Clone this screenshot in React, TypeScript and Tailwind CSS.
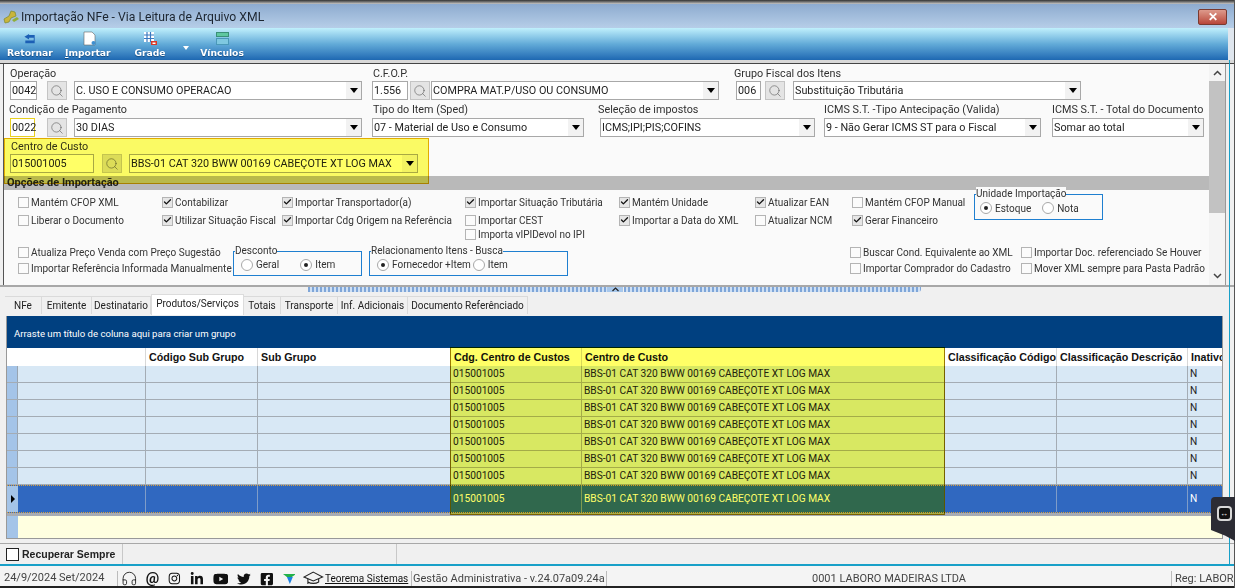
import { Check, Headphones, Search } from 'lucide-react';
import { FaFacebookSquare, FaInstagram, FaLinkedinIn, FaTwitter, FaYoutube } from 'react-icons/fa';

/* ---------- form bits ---------- */

function Lens({ yellow }: { yellow?: boolean }) {
  return (
    <div className={`flex items-center justify-center h-[19px] w-[20px] border border-[#c4c4c4] ${yellow ? 'bg-[#dcdcdc]' : 'bg-[#e4e4e4]'}`}>
      <Search size={14} strokeWidth={1} color="#555" />
    </div>
  );
}

function TextBox({ value, width, className = '' }: { value: string; width: number; className?: string }) {
  return (
    <div style={{ width }} className={`h-[19px] shrink-0 bg-white border border-[#a8a8a8] pl-[1px] leading-[17px] whitespace-nowrap ${className}`}>
      {value}
    </div>
  );
}

function Combo({ value, width }: { value: string; width: number }) {
  return (
    <div style={{ width }} className="h-[19px] shrink-0 flex bg-white border border-[#a8a8a8] leading-[17px]">
      <span className="flex-1 pl-[1px] overflow-hidden whitespace-nowrap">{value}</span>
      <span className="w-[15px] bg-[#f2f2f2] flex items-center justify-center">
        <span className="w-0 h-0 border-x-[4px] border-x-transparent border-t-[5px] border-t-black" />
      </span>
    </div>
  );
}

function Label({ text, className = '' }: { text: string; className?: string }) {
  return <div className={`h-[16px] leading-[18px] whitespace-nowrap text-[#303030] ${className}`}>{text}</div>;
}

function Check2({ label, on }: { label: string; on?: boolean }) {
  return (
    <div className="flex items-center gap-[2px] h-[14px] whitespace-nowrap text-[10px] text-[#333]">
      <span className={`flex items-center justify-center shrink-0 w-[9px] h-[9px] box-content border border-[#b4b4b4] ${on ? 'bg-[#e6e6e6]' : 'bg-[#fbfbfb]'}`}>
        {on && <Check size={10} strokeWidth={3.5} color="#111" />}
      </span>
      {label}
    </div>
  );
}

function Radio({ label, on }: { label: string; on?: boolean }) {
  return (
    <span className="flex items-center gap-[3px] whitespace-nowrap">
      <span className="flex items-center justify-center shrink-0 w-[10px] h-[10px] box-content rounded-full border border-[#a8a8a8] bg-white">
        {on && <span className="w-[4px] h-[4px] rounded-full bg-[#222]" />}
      </span>
      {label}
    </span>
  );
}

function GroupBox({ title, width, height, children }: { title: string; width: number; height: number; children: React.ReactNode }) {
  return (
    <div style={{ width, height }} className="relative shrink-0 border border-[#1f7fd0] flex items-center text-[10px] text-[#333]">
      <span className="absolute -top-[8px] left-[1px] bg-[#fafafa] leading-[13px] whitespace-nowrap">{title}</span>
      {children}
    </div>
  );
}

/* ---------- grid data ---------- */

const COLS = [128, 112, 193, 131, 363, 112, 131, 36];
const HEADERS = ['', 'Código Sub Grupo', 'Sub Grupo', 'Cdg. Centro de Custos', 'Centro de Custo', 'Classificação Código', 'Classificação Descrição', 'Inativo'];
const ROW = ['', '', '', '015001005', 'BBS-01 CAT 320 BWW 00169 CABEÇOTE XT LOG MAX', '', '', 'N'];
const TABS = [
  ['NFe', 37],
  ['Emitente', 50],
  ['Destinatario', 59],
  ['Produtos/Serviços', 93],
  ['Totais', 37],
  ['Transporte', 57],
  ['Inf. Adicionais', 70],
  ['Documento Referênciado', 120],
] as const;

export default function App() {
  return (
    <div className="relative w-[1235px] h-[588px] overflow-hidden flex flex-col bg-[#f0f0f0] text-[10.8px] text-[#222] font-['Roboto','Noto_Sans',sans-serif]">
      {/* Title bar */}
      <div className="h-[4px] bg-gradient-to-b from-[#333] to-[#c8c8c8]" />
      <div className="h-[24px] shrink-0 flex items-center bg-gradient-to-b from-[#8eabcf] to-[#b6cee8] pl-[3px] pr-[8px] pt-[2px]">
        <svg width="17" height="17" viewBox="0 0 17 17">
          <path d="M1 10l5-3 2-5 4 1 1 4-5 2-2 4-4 1z" fill="#c9b53c" stroke="#7d8a2a" strokeWidth="0.7" />
          <path d="M9 11l5-3 2 2-5 3z" fill="#8fae3a" />
        </svg>
        <span className="ml-[1px] text-[12.2px] text-[#1c2530]">Importação NFe - Via Leitura de Arquivo XML</span>
        <div className="ml-auto w-[29px] h-[16px] rounded-[2px] border border-[#7a3a30] bg-gradient-to-b from-[#dd9a8c] to-[#b8463a] flex items-center justify-center text-white font-bold text-[12px] leading-none">
          ✕
        </div>
      </div>

      {/* Toolbar */}
      <div className="h-[32px] shrink-0 flex bg-gradient-to-b from-[#c0f0fc] via-[#62abd8] to-[#1e68b2] text-white font-['DejaVu_Sans',sans-serif] font-bold text-[9.2px] [text-shadow:0_1px_1px_#134a80] pl-[7px] border-r-[7px] border-r-[#dfe6ee]">
        <div className="w-[58px] flex flex-col items-start">
          <svg width="16" height="13" viewBox="0 0 16 13" className="ml-[15px] mt-[5px]">
            <path d="M7 1L2 4l5 3V5h5v3H3v3h10V2H7z" fill="#1c5fb5" />
          </svg>
          <span className="mt-[1px]">Retornar</span>
        </div>
        <div className="w-[68px] flex flex-col items-start">
          <svg width="14" height="15" viewBox="0 0 14 15" className="ml-[18px] mt-[3px]">
            <path d="M1 1h8l3 3v10H1z" fill="#fff" stroke="#666" strokeWidth="0.6" />
            <circle cx="10.5" cy="12" r="2" fill="#3f8fd0" />
          </svg>
          <span>
            <span className="underline">I</span>mportar
          </span>
        </div>
        <div className="w-[50px] flex flex-col items-center pr-[16px]">
          <svg width="15" height="15" viewBox="0 0 15 15" className="mt-[3px]">
            <path d="M1 1h10v10H1z" fill="#fff" />
            <path d="M1 4h10M1 7.500h10M4 1v10M7.500 1v10" stroke="#3a78c0" strokeWidth="1.200" />
            <path d="M8 10h6v4H8z" fill="#d83a2a" />
            <path d="M9.500 11.500h3v1.500h-3z" fill="#fff" />
          </svg>
          <span>Grade</span>
        </div>
        <div className="w-[16px] pt-[18px]">
          <span className="block w-0 h-0 border-x-[3px] border-x-transparent border-t-[4px] border-t-white" />
        </div>
        <div className="w-[46px] flex flex-col items-center">
          <svg width="13" height="14" viewBox="0 0 13 14" className="mt-[4px]">
            <rect x="0.500" y="0.500" width="12" height="4" fill="#5fc8a0" stroke="#3a9078" />
            <rect x="0.500" y="6.500" width="12" height="6" fill="#7fc8e0" stroke="#4a98b8" />
          </svg>
          <span>Vínculos</span>
        </div>
      </div>

      {/* Options panel */}
      <div className="h-[4px] shrink-0 bg-[#d8d8d8] border-b border-[#444]" />
      <div className="ml-[3px] mr-[9px] h-[221px] shrink-0 flex border-l border-[#555] border-r border-r-[#999] bg-[#fafafa]">
        <div className="relative flex-1 min-w-0 flex flex-col">
          {/* first row */}
          <div className="flex pl-[6px] h-[36px] pt-[1px]">
            <div className="w-[362px] shrink-0">
              <Label text="Operação" />
              <div className="flex">
                <TextBox value="0042" width={27} />
                <div className="ml-[10px]"><Lens /></div>
                <div className="ml-[7px]"><Combo value="C. USO E CONSUMO OPERACAO" width={288} /></div>
              </div>
            </div>
            <div className="w-[363px] shrink-0">
              <Label text="C.F.O.P." className="ml-[1px]" />
              <div className="flex">
                <TextBox value="1.556" width={36} />
                <div className="ml-[2px]"><Lens /></div>
                <div className="ml-[1px]"><Combo value="COMPRA MAT.P/USO OU CONSUMO" width={288} /></div>
              </div>
            </div>
            <div>
              <Label text="Grupo Fiscal dos Itens" className="-ml-[1px]" />
              <div className="flex">
                <TextBox value="006" width={25} className="ml-[1px]" />
                <div className="ml-[4px]"><Lens /></div>
                <div className="ml-[8px]"><Combo value="Substituição Tributária" width={288} /></div>
              </div>
            </div>
          </div>

          {/* second row */}
          <div className="flex pl-[6px] h-[37px] pt-[1px]">
            <div className="w-[362px] shrink-0">
              <Label text="Condição de Pagamento" className="-ml-[1px] mb-[1px]" />
              <div className="flex">
                <TextBox value="0022" width={25} className="border-[#e8d020]" />
                <div className="ml-[12px]"><Lens /></div>
                <div className="ml-[7px]"><Combo value="30 DIAS" width={288} /></div>
              </div>
            </div>
            <div className="w-[226px] shrink-0">
              <Label text="Tipo do Item (Sped)" className="ml-[1px] mb-[1px]" />
              <Combo value="07 - Material de Uso e Consumo" width={212} />
            </div>
            <div className="w-[226px] shrink-0">
              <Label text="Seleção de impostos" className="mb-[1px]" />
              <div className="ml-[2px]"><Combo value="ICMS;IPI;PIS;COFINS" width={215} /></div>
            </div>
            <div className="w-[228px] shrink-0">
              <Label text="ICMS S.T. -Tipo Antecipação (Valida)" className="mb-[1px]" />
              <Combo value="9 - Não Gerar ICMS ST para o Fiscal" width={217} />
            </div>
            <div>
              <Label text="ICMS S.T. - Total do Documento" className="mb-[1px]" />
              <Combo value="Somar ao total" width={152} />
            </div>
          </div>

          {/* third row */}
          <div className="pl-[6px] h-[39px] pt-[1px]">
            <Label text="Centro de Custo" className="ml-[1px]" />
            <div className="flex">
              <TextBox value="015001005" width={84} />
              <div className="ml-[8px]"><Lens yellow /></div>
              <div className="ml-[7px]"><Combo value="BBS-01 CAT 320 BWW 00169 CABEÇOTE XT LOG MAX" width={289} /></div>
            </div>
          </div>

          <div className="h-[14px] shrink-0 bg-[#b9b9b9] pl-[3px] text-[11px] font-bold leading-[13px] text-[#222]">Opções de Importação</div>

          {/* check options */}
          <div className="mt-[5px] ml-[14px] h-[50px] grid grid-cols-[144px_120px_183px_154px_136px_97px_122px_auto] grid-rows-[18px_14px_14px] items-start">
            <Check2 label="Mantém CFOP XML" />
            <Check2 label="Contabilizar" on />
            <Check2 label="Importar Transportador(a)" on />
            <Check2 label="Importar Situação Tributária" on />
            <Check2 label="Mantém Unidade" on />
            <Check2 label="Atualizar EAN" on />
            <Check2 label="Mantém CFOP Manual" />
            <div className="row-span-3 -mt-[1px]">
              <GroupBox title="Unidade Importação" width={129} height={26}>
                <div className="flex gap-[11px] pl-[5px] pt-[2px]">
                  <Radio label="Estoque" on />
                  <Radio label="Nota" />
                </div>
              </GroupBox>
            </div>
            <Check2 label="Liberar o Documento" />
            <Check2 label="Utilizar Situação Fiscal" on />
            <Check2 label="Importar Cdg Origem na Referência" on />
            <Check2 label="Importar CEST" />
            <Check2 label="Importar a Data do XML" on />
            <Check2 label="Atualizar NCM" />
            <Check2 label="Gerar Financeiro" on />
            <div className="col-start-4">
              <Check2 label="Importa vIPIDevol no IPI" />
            </div>
          </div>

          <div className="mt-[6px] ml-[14px] flex">
            <div className="w-[215px] shrink-0 flex flex-col gap-[2px] -mt-[6px]">
              <Check2 label="Atualiza Preço Venda com Preço Sugestão" />
              <Check2 label="Importar Referência Informada Manualmente" />
            </div>
            <GroupBox title="Desconto" width={129} height={25}>
              <div className="flex gap-[21px] pl-[7px] pt-[2px]">
                <Radio label="Geral" />
                <Radio label="Item" on />
              </div>
            </GroupBox>
            <div className="ml-[7px]">
              <GroupBox title="Relacionamento Itens - Busca" width={199} height={25}>
                <div className="flex gap-[2px] pl-[7px] pt-[2px]">
                  <Radio label="Fornecedor +Item" on />
                  <Radio label="Item" />
                </div>
              </GroupBox>
            </div>
            <div className="ml-[282px] w-[171px] shrink-0 flex flex-col gap-[2px] -mt-[6px]">
              <Check2 label="Buscar Cond. Equivalente ao XML" />
              <Check2 label="Importar Comprador do Cadastro" />
            </div>
            <div className="shrink-0 flex flex-col gap-[2px] -mt-[6px]">
              <Check2 label="Importar Doc. referenciado Se Houver" />
              <Check2 label="Mover XML sempre para Pasta Padrão" />
            </div>
          </div>

          {/* highlight drawn over the cost-centre block */}
          <div className="absolute left-0 top-[74px] w-[425px] h-[46px] bg-[#ffff66] mix-blend-multiply border border-[#e6b000]" />
        </div>

        {/* Scrollbar */}
        <div className="w-[16px] shrink-0 flex flex-col items-center bg-[#f4f4f4] text-[#444]">
          <svg width="9" height="6" viewBox="0 0 9 6" className="mt-[6px] mb-[5px]"><path d="M1 5l3.500-3.500L8 5" fill="none" stroke="#444" strokeWidth="1.500" /></svg>
          <div className="w-full h-[132px] bg-[#c2c2c2]" />
          <svg width="9" height="6" viewBox="0 0 9 6" className="mt-auto mb-[6px]"><path d="M1 1l3.500 3.500L8 1" fill="none" stroke="#444" strokeWidth="1.500" /></svg>
        </div>
      </div>

      {/* Splitter */}
      <div className="h-[8px] shrink-0 relative border-t-2 border-[#a8a8a8]">
        <div className="flex h-[5px] ml-[308px] w-[613px]">
          <div className="w-[299px] bg-[repeating-linear-gradient(90deg,#7fa6d8_0,#7fa6d8_2px,#cfe0f4_2px,#cfe0f4_4px)]" />
          <div className="w-[16px] bg-[#a8c8ec] flex justify-center">
            <svg width="7" height="5" viewBox="0 0 7 5"><path d="M0.500 4l3-3 3 3" fill="none" stroke="#222" strokeWidth="1.200" /></svg>
          </div>
          <div className="ml-[1px] flex-1 rounded-br-[3px] bg-[repeating-linear-gradient(90deg,#7fa6d8_0,#7fa6d8_2px,#cfe0f4_2px,#cfe0f4_4px)]" />
        </div>
      </div>

      {/* Tabs */}
      <div className="h-[22px] shrink-0 flex items-end pl-[5px] text-[10px] text-[#222]">
        {TABS.map(([name, w]) =>
          name === 'Produtos/Serviços' ? (
            <div key={name} style={{ width: w }} className="h-[21px] bg-white border-x border-t border-[#dcdcdc] text-center leading-[17px] whitespace-nowrap">
              {name}
            </div>
          ) : (
            <div key={name} style={{ width: w }} className="h-[18px] mb-[1px] bg-[#f0f0f0] border-r border-t border-[#dadada] text-center leading-[18px] whitespace-nowrap">
              {name}
            </div>
          ),
        )}
      </div>

      {/* Grid */}
      <div className="relative mt-[1px] ml-[6px] w-[1217px] h-[223px] shrink-0 border-x border-b border-[#999] flex flex-col overflow-hidden">
        <div className="h-[32px] shrink-0 bg-[#004080] text-white text-[9.6px] pl-[7px] leading-[35px]">
          Arraste um título de coluna aqui para criar um grupo
        </div>
        <div className="flex h-[18px] shrink-0 bg-white font-['Liberation_Sans',sans-serif] font-bold text-[10.7px] leading-[18px] text-[#111]">
          <div className="w-[11px] shrink-0" />
          {HEADERS.map((h, i) => (
            <div key={i} style={{ width: COLS[i] }} className="shrink-0 pl-[3px] overflow-hidden whitespace-nowrap border-r border-[#d8d8d8]">
              {h}
            </div>
          ))}
        </div>
        {Array.from({ length: 7 }).map((_, r) => (
          <div key={r} className="flex h-[17px] shrink-0 bg-[#d8e8f5] border-b border-[#a4acb4] text-[10.2px] leading-[16px]">
            <div className="w-[11px] shrink-0 bg-[#a4c4e8] border-r border-[#98a4b0]" />
            {ROW.map((c, i) => (
              <div key={i} style={{ width: COLS[i] }} className="shrink-0 pl-[2px] overflow-hidden whitespace-nowrap border-r border-[#a4acb4]">
                {c}
              </div>
            ))}
          </div>
        ))}
        <div className="flex h-[28px] shrink-0 bg-[#3068c0] border-y border-dotted border-[#d8a040] text-white text-[10.2px] leading-[26px]">
          <div className="w-[11px] shrink-0 bg-[#a4c4e8] flex items-center justify-center">
            <span className="w-0 h-0 border-y-[4px] border-y-transparent border-l-[4px] border-l-black" />
          </div>
          {ROW.map((c, i) => (
            <div key={i} style={{ width: COLS[i] }} className="shrink-0 pl-[2px] overflow-hidden whitespace-nowrap border-r border-[#7f9cc8]">
              {c}
            </div>
          ))}
        </div>
        <div className="h-[3px] shrink-0 bg-[#a8acb4]" />
        <div className="flex-1 flex">
          <div className="w-[11px] shrink-0 bg-[#a4c4e8]" />
          <div className="flex-1 bg-[#ffffe0]" />
        </div>
        {/* highlight drawn over the cost-centre columns */}
        <div className="absolute left-[443px] top-[31px] w-[495px] h-[168px] bg-[#ffff66] mix-blend-multiply border border-[#b89000]" />
      </div>

      {/* Lower strip */}
      <div className="h-[5px] shrink-0 border-b border-[#a8a8a8]" />
      <div className="h-[20px] shrink-0 flex items-stretch">
        <div className="w-[122px] shrink-0 flex items-center pl-[6px] gap-[3px] font-['Liberation_Sans',sans-serif] font-bold text-[10.5px] leading-[16px] overflow-hidden">
          <span className="w-[11px] h-[11px] box-content border border-[#222] bg-white shrink-0" />
          <span className="whitespace-nowrap text-[#222]">Recuperar Sempre</span>
        </div>
        <div className="w-[275px] shrink-0 border-x border-[#c8c8c8]" />
        <div className="flex-1" />
      </div>
      <div className="h-[2px] shrink-0 bg-[#18a0c8]" />

      {/* Status bar */}
      <div className="flex-1 min-h-0 pt-[5px] flex items-center bg-[#f4f4f4] border-b-2 border-[#222] text-[#444] whitespace-nowrap overflow-hidden">
        <span className="ml-[4px] w-[113px] shrink-0 text-[11px]">24/9/2024 Set/2024</span>
        <div className="flex items-center gap-[9px] border-l border-[#bbb] h-full pl-[3px] text-[#111] w-[207px] shrink-0">
          <Headphones size={17} strokeWidth={1.2} />
          <span className="-ml-[1px] text-[15px] font-bold leading-none">@</span>
          <FaInstagram size={13} />
          <FaLinkedinIn size={14} />
          <FaYoutube size={16} />
          <FaTwitter size={14} />
          <FaFacebookSquare size={14} />
          <svg width="13" height="10" viewBox="0 0 13 10"><path d="M0 0h13L9 3H4z" fill="#22b04a" /><path d="M4 3h6L7 10z" fill="#1c80e0" /></svg>
          <svg width="21" height="17" viewBox="0 0 21 17" className="-ml-[1px]">
            <path d="M10.500 2L20 7l-9.500 4L1 7z" fill="none" stroke="#222" strokeWidth="1.100" />
            <path d="M5 9v5M16 9v3c-3 2-8 2-11 0" fill="none" stroke="#222" strokeWidth="1.100" />
          </svg>
        </div>
        <span className="ml-[1px] w-[86px] shrink-0 text-[10px] underline text-[#111]">Teorema Sistemas</span>
        <span className="w-[195px] shrink-0 border-l border-[#bbb] pl-[1px] text-[11px] h-full leading-[16px]">Gestão Administrativa - v.24.07a09.24a</span>
        <div className="w-[565px] shrink-0 border-l border-[#bbb] h-full pl-[205px] text-[11px] leading-[16px]">0001 LABORO MADEIRAS LTDA</div>
        <span className="flex-1 border-l border-[#bbb] h-full pl-[3px] text-[11px] leading-[16px]">Reg: LABORO</span>
      </div>

      {/* Window frame edges */}
      <div className="absolute right-[5px] top-[60px] h-[505px] w-[1px] bg-[#18a0c8]" />
      <div className="absolute right-0 top-0 h-[588px] w-[1px] bg-[#555]" />

      {/* Remote-support tab floating over the window */}
      <div className="absolute left-[1211px] top-[497px] w-[24px] h-[44px] bg-[#2c2c34] rounded-tl-[4px] flex justify-center pt-[9px] pl-[2px] [clip-path:polygon(0_0,100%_0,100%_100%,60%_88%,0_75%)]">
        <div className="w-[15px] h-[15px] rounded-[4px] border-2 border-[#d8d8d8] bg-[#111] flex items-center justify-center">
          <span className="text-white text-[8px] leading-none font-bold">↔</span>
        </div>
      </div>
    </div>
  );
}
